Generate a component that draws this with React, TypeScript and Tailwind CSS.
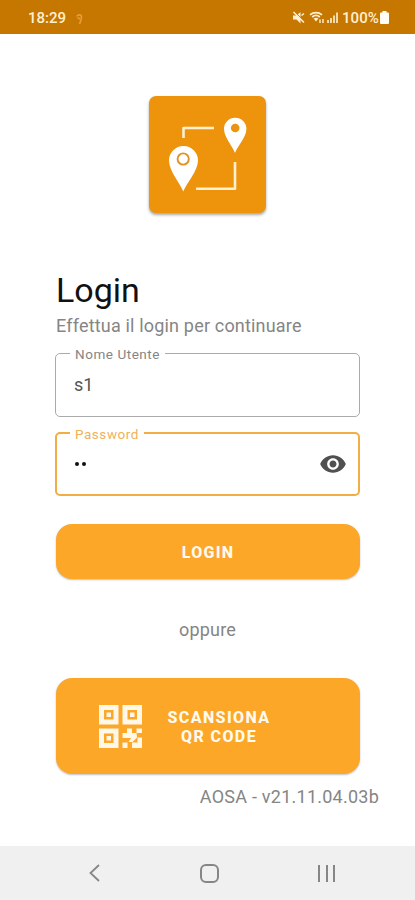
import React from 'react';

const StatusBar: React.FC = () => (
  <header className="flex h-[34px] shrink-0 items-center justify-between bg-[#c67700] pl-[28px] pr-[26px] pt-px text-[#fff0d2]">
    <div className="flex items-center gap-[10px]">
      <span className="text-[15px] leading-[18px] font-medium">18:29</span>
      <svg className="mt-[2px] h-[12px] w-[7px]" viewBox="0 0 7 12" fill="none" stroke="#e79c35" strokeWidth="1.6">
        <path d="M1 3.5C1 1.5 5.5 1 5.5 4.2C5.5 6.5 4.5 8.5 3.5 11M1.5 4.5L4 6" />
      </svg>
    </div>
    <div className="flex items-center">
      <svg className="mr-[4px] h-[13px] w-[13px]" viewBox="0 0 13 13" fill="currentColor">
        <path d="M1 4.5H4.500L8.500 1V12.500L4.500 8.500H1Z" />
        <path d="M3 1L12 10" stroke="#c67700" strokeWidth="1" />
        <path d="M1.500 1L12 11.500M9.500 4.500L12 2.500" stroke="currentColor" strokeWidth="1.500" />
      </svg>
      <svg className="mr-[2px] h-[13px] w-[16px]" viewBox="0 0 16 13" fill="none" stroke="currentColor">
        <path d="M1 3.8C4.5 .8 9.5 .8 13 3.8M3.2 6C5.5 4 8.5 4 10.8 6" strokeWidth="1.7" />
        <path d="M4.6 7.4C6.2 6.4 7.8 6.4 9.4 7.4L7 10.6Z" fill="currentColor" stroke="none" />
        <path d="M11 12V8.5M14 8V12" strokeWidth="1.4" />
      </svg>
      <svg className="mr-[4px] h-[13px] w-[11px]" viewBox="0 0 11 13" fill="currentColor">
        <path d="M0 9H2V12H0ZM3 7H5V12H3ZM6 4.5H8V12H6ZM9 1.5H11V12H9Z" opacity=".8" />
      </svg>
      <span className="text-[15px] leading-[18px] font-medium tracking-[0.1px]">100%</span>
      <svg className="ml-px h-[13px] w-[9px]" viewBox="0 0 9 13" fill="#fffdf5">
        <path d="M2.500 0H6.500V1.500H8Q9 1.500 9 2.500V12Q9 13 8 13H1Q0 13 0 12V2.500Q0 1.500 1 1.500H2.500Z" />
      </svg>
    </div>
  </header>
);

const Logo: React.FC = () => (
  <div className="mx-auto mt-[62px] h-[117px] w-[117px] rounded-[7px] bg-[#ee930c] shadow-[0_2px_3px_rgba(0,0,0,0.35)]">
    <svg className="h-full w-full" viewBox="0 0 117 117" fill="none">
      <path d="M34.500 42V32H65M47 92.800H86V66" stroke="#fff1d0" strokeWidth="2.600" strokeLinejoin="round" />
      <path fill="#fff" d="M34.300 95.500C31 87 20 75 20 64.500A14.500 14.500 0 0 1 49 64.500C49 75 37.500 87 34.300 95.500Z" />
      <circle cx="34.200" cy="63" r="5.600" stroke="#e39326" strokeWidth="1.900" />
      <path fill="#fff" d="M86 57C83.500 50 75 41 75 33A11.200 11.200 0 0 1 97.400 33C97.400 41 88.500 50 86 57Z" />
      <circle cx="86.200" cy="32" r="4.300" fill="#ea940f" />
    </svg>
  </div>
);

const QrIcon: React.FC = () => (
  <svg className="h-[43px] w-[43px]" viewBox="0 0 43 43" fill="#fff8e8" fillRule="evenodd">
    <path d="M0 0H19.500V19.500H0ZM5 5V14.500H14.500V5ZM7.500 7.500H12V12H7.500Z" />
    <path d="M23.500 0H43V19.500H23.500ZM28.500 5V14.500H38V5ZM31 7.500H35.500V12H31Z" />
    <path d="M0 23.500H19.500V43H0ZM5 28.500V38H14.500V28.500ZM7.500 31H12V35.500H7.500Z" />
    <path d="M23.500 28H28V23.500H33V28H37.500L38 32.500L33.500 37H29.500L32 33H23.500ZM37.500 23.500H43V28H37.500ZM38.500 32.500H43V43H33V37.500H38.500ZM23.500 37.500H28.500V43H23.500Z" />
  </svg>
);

const NavBar: React.FC = () => (
  <nav className="mt-auto flex h-[54px] shrink-0 items-center bg-[#f0f0f0] pl-[89px] text-[#868686]">
    <svg className="h-[18px] w-[11px]" viewBox="0 0 11 18" fill="none" stroke="currentColor" strokeWidth="1.8">
      <path d="M10 1L1.500 9L10 17" />
    </svg>
    <div className="ml-[100px] h-[19px] w-[19px] rounded-[6px] border-2 border-current" />
    <div className="ml-[99px] flex h-[17px] w-[17px] justify-between">
      <span className="w-[2px] bg-current" />
      <span className="w-[2px] bg-current" />
      <span className="w-[2px] bg-current" />
    </div>
  </nav>
);

const App: React.FC = () => {
  return (
    <div className="flex h-[900px] w-[415px] flex-col overflow-hidden bg-white font-['Roboto',sans-serif]">
      <StatusBar />
      <Logo />

      <main className="mt-[57px] flex flex-col pl-[55px] pr-[55px]">
        <h1 className="pl-px text-[34px] leading-[40px] text-[#111]">Login</h1>
        <p className="mt-[5px] pl-px text-[18px] leading-[22px] tracking-[0.18px] whitespace-nowrap text-[#858585]">
          Effettua il login per continuare
        </p>

        <fieldset className="mt-[8px] h-[72px] w-[305px] rounded-[5px] border border-[#aaa]">
          <legend className="ml-[14px] px-[5px] pt-[2px] text-[13.500px] leading-[14px] tracking-[0.540px] text-[#858585]">
            Nome Utente
          </legend>
          <div className="pl-[18px] pt-[13px] text-[18px] leading-[22px] text-[#555]">s1</div>
        </fieldset>

        <fieldset className="mt-[8px] h-[71px] w-[305px] rounded-[5px] border-2 border-[#f3ad47]">
          <legend className="ml-[13px] px-[5px] pt-[2px] text-[13.500px] leading-[14px] tracking-[0.540px] text-[#efb258]">
            Password
          </legend>
          <div className="flex items-center justify-between pl-[18px] pr-[11px] pt-[9px]">
            <div className="flex gap-[3px]">
              <span className="h-[4px] w-[4px] rounded-full bg-[#111]" />
              <span className="h-[4px] w-[4px] rounded-full bg-[#111]" />
            </div>
            <svg className="h-[28px] w-[28px]" viewBox="0 0 24 24" fill="#505050">
              <path d="M12 4.500C7 4.500 2.730 7.610 1 12c1.730 4.390 6 7.500 11 7.500s9.270-3.110 11-7.500c-1.730-4.390-6-7.500-11-7.500zM12 17c-2.760 0-5-2.240-5-5s2.240-5 5-5 5 2.240 5 5-2.240 5-5 5zm0-8c-1.660 0-3 1.340-3 3s1.340 3 3 3 3-1.340 3-3-1.340-3-3-3z" />
            </svg>
          </div>
        </fieldset>

        <button className="ml-px mt-[28px] h-[55px] w-[304px] rounded-[16px] bg-[#fda728] pt-[2px] text-[16px] font-extrabold tracking-[1.300px] text-[#fffaf0] shadow-[0_1px_2px_rgba(0,0,0,0.25)]">
          LOGIN
        </button>

        <div className="mt-[40px] text-center text-[18px] leading-[22px] tracking-[0.200px] text-[#858585]">oppure</div>

        <button className="ml-px mt-[37px] flex h-[96px] w-[304px] items-center rounded-[16px] bg-[#fda728] pl-[43px] shadow-[0_1px_2px_rgba(0,0,0,0.25)]">
          <QrIcon />
          <span className="ml-[25px] mt-[2px] w-[104px] text-center text-[16px] leading-[19px] font-extrabold tracking-[1.400px] whitespace-nowrap text-[#fffaf0]">
            SCANSIONA
            <br />
            QR CODE
          </span>
        </button>
      </main>

      <div className="mt-[12px] pr-[36px] text-right text-[18px] leading-[22px] tracking-[0.240px] text-[#858585]">
        AOSA - v21.11.04.03b
      </div>

      <NavBar />
    </div>
  );
};

export default App;
